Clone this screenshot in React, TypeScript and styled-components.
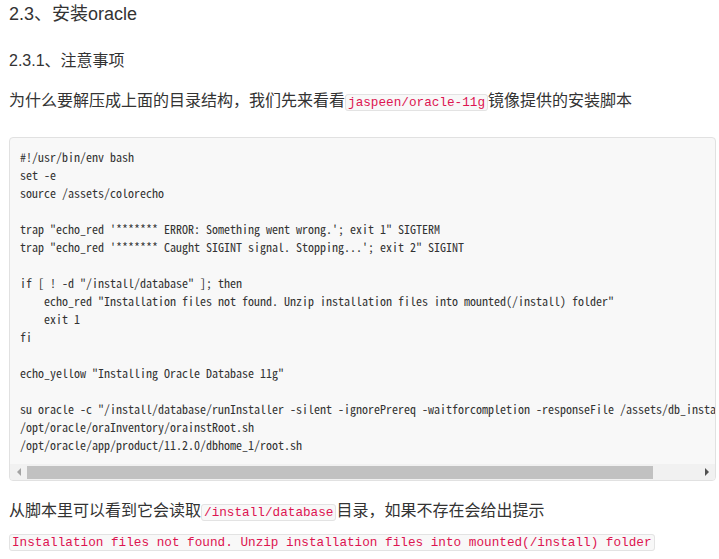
import React from "react";
import styled, { createGlobalStyle } from "styled-components";

const Global = createGlobalStyle`
  html, body { margin: 0; padding: 0; background: #fff; }
  body {
    font-family: "Liberation Sans", "Noto Sans CJK SC", sans-serif;
    color: #333;
  }
`;

const Page = styled.div`
  display: flex;
  flex-direction: column;
  padding: 0 0 0 9px;
  width: 719px;
  box-sizing: border-box;
`;

const H3 = styled.h3`
  margin: 2px 0 0;
  font-size: 18px;
  line-height: 24px;
  font-weight: normal;
  color: #333;
`;

const H4 = styled.h4`
  margin: 24px 0 0;
  font-size: 16px;
  line-height: 22px;
  font-weight: normal;
  color: #333;
`;

const P = styled.p<{ $mt: number }>`
  margin: ${(p) => p.$mt}px 0 0;
  font-size: 16px;
  line-height: 24px;
  color: #333;
  white-space: nowrap;
`;

const Code = styled.code`
  font-family: "Liberation Mono", monospace;
  font-size: 12.7px;
  line-height: 14px;
  color: #dd1450;
  background: #f8f8f8;
  border: 1px solid #e3e3e3;
  border-radius: 3px;
  padding: 0 2px;
  letter-spacing: 0;
`;

const CodeBlock = styled.div`
  margin-top: 24px;
  width: 707px;
  box-sizing: border-box;
  border: 1px solid #e1e1e1;
  border-radius: 4px;
  background: #f8f8f8;
  overflow: hidden;
  display: flex;
  flex-direction: column;
`;

const Pre = styled.pre`
  margin: 0;
  padding: 10px;
  overflow: hidden;
  font-family: "Noto Sans Mono CJK SC", "Liberation Mono", monospace;
  font-size: 12px;
  line-height: 18px;
  color: #333;
  white-space: pre;
`;

const Scrollbar = styled.div`
  height: 16px;
  background: #f1f1f1;
  display: flex;
  align-items: center;
`;

const ArrowBtn = styled.div<{ $dir: "left" | "right"; $active: boolean }>`
  width: 17px;
  height: 16px;
  display: flex;
  align-items: center;
  justify-content: center;
  flex: none;
  &::before {
    content: "";
    width: 0;
    height: 0;
    border-top: 4px solid transparent;
    border-bottom: 4px solid transparent;
    ${(p) =>
      p.$dir === "left"
        ? `border-right: 4px solid ${p.$active ? "#505050" : "#a3a3a3"};`
        : `border-left: 4px solid ${p.$active ? "#505050" : "#a3a3a3"};`}
  }
`;

const Track = styled.div`
  flex: 1;
  height: 16px;
  display: flex;
  align-items: center;
`;

const Thumb = styled.div`
  height: 13px;
  background: #c1c1c1;
`;

const code = `#!/usr/bin/env bash
set -e
source /assets/colorecho

trap "echo_red '******* ERROR: Something went wrong.'; exit 1" SIGTERM
trap "echo_red '******* Caught SIGINT signal. Stopping...'; exit 2" SIGINT

if [ ! -d "/install/database" ]; then
    echo_red "Installation files not found. Unzip installation files into mounted(/install) folder"
    exit 1
fi

echo_yellow "Installing Oracle Database 11g"

su oracle -c "/install/database/runInstaller -silent -ignorePrereq -waitforcompletion -responseFile /assets/db_install.rsp"
/opt/oracle/oraInventory/orainstRoot.sh
/opt/oracle/app/product/11.2.0/dbhome_1/root.sh`;

export default function App() {
  const thumbWidth = 626;
  return (
    <>
      <Global />
      <Page>
        <H3>2.3、安装oracle</H3>
        <H4>2.3.1、注意事项</H4>
        <P $mt={17}>
          为什么要解压成上面的目录结构，我们先来看看<Code>jaspeen/oracle-11g</Code>镜像提供的安装脚本
        </P>
        <CodeBlock>
          <Pre>{code}</Pre>
          <Scrollbar>
            <ArrowBtn $dir="left" $active={false} />
            <Track>
              <Thumb style={{ width: thumbWidth }} />
            </Track>
            <ArrowBtn $dir="right" $active={true} />
          </Scrollbar>
        </CodeBlock>
        <P $mt={18}>
          从脚本里可以看到它会读取<Code>/install/database</Code>目录，如果不存在会给出提示
        </P>
        <P $mt={6}>
          <Code>Installation files not found. Unzip installation files into mounted(/install) folder</Code>
        </P>
      </Page>
    </>
  );
}
